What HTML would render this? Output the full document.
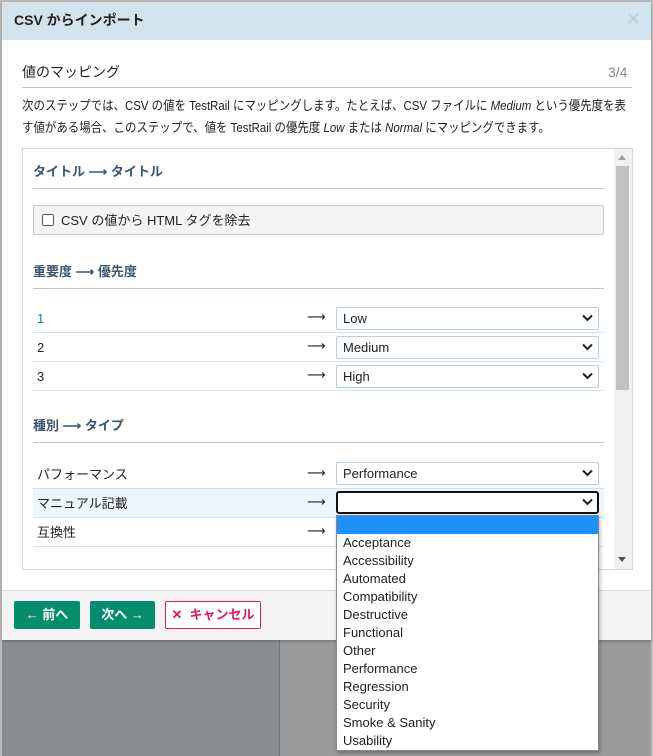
<!DOCTYPE html>
<html><head><meta charset="utf-8"><style>
*{margin:0;padding:0;box-sizing:border-box}
body{width:653px;height:756px;position:relative;overflow:hidden;background:#bdbdbd;font-family:"Liberation Sans","Noto Sans CJK JP",sans-serif;color:#222}
.a{position:absolute}
.t{font-size:13px;line-height:16px;white-space:nowrap}
.sq{transform:scaleX(.88);transform-origin:left center}
.sel{position:absolute;left:336px;width:263px;height:23px;border:1px solid #b9cfe0;border-radius:2px;background:#fff;font-size:13px;line-height:21px;padding-left:6px}
.sel svg{position:absolute;right:5px;top:6px}
.row{position:absolute;left:33px;width:571px;height:29px;border-bottom:1px solid #d3e2ec}
.row span{position:absolute;left:4px;top:7px;font-size:13px;line-height:16px}
.row i{position:absolute;left:274px;top:6px;font-style:normal;font-size:13px;font-family:"DejaVu Sans",sans-serif}
.h{position:absolute;left:33px;width:571px;border-bottom:1px solid #b3cbdb;font-size:13px;color:#3c5670;font-weight:bold;height:26px;line-height:18px}
.btn{position:absolute;top:601px;height:28px;border-radius:2px;font-size:13px;font-weight:bold;line-height:28px;text-align:center;color:#fff;background:#058e6e}
.dd{font-size:13px;line-height:18px;padding-left:6px;height:18px}
</style></head><body>
<div class="a" style="left:2px;top:598px;width:277px;height:158px;background:#8a8d90"></div>
<div class="a" style="left:279px;top:598px;width:372px;height:158px;background:#9b9b9b;border-left:1px solid #6f7a85"></div>
<div class="a" style="left:2px;top:2px;width:649px;height:638px;background:#fff;box-shadow:0 1px 3px rgba(0,0,0,.3)"></div>
<div class="a" style="left:2px;top:2px;width:649px;height:38px;background:#d3e3ed"></div>
<div class="a t" style="left:14px;top:12px;font-size:14px;font-weight:bold;color:#222">CSV からインポート</div>
<div class="a" style="left:626px;top:10px;color:#b8cedd;font-size:18px;line-height:18px">✕</div>
<div class="a t" style="left:22px;top:64px;font-size:14px">値のマッピング</div>
<div class="a t" style="left:608px;top:64px;font-size:14px;color:#888">3/4</div>
<div class="a" style="left:22px;top:87px;width:610px;height:1px;background:#c4c4c4"></div>
<div class="a t sq" style="left:22px;top:98px">次のステップでは、CSV の値を TestRail にマッピングします。たとえば、CSV ファイルに <i>Medium</i> という優先度を表</div>
<div class="a t sq" style="left:22px;top:120px">す値がある場合、このステップで、値を TestRail の優先度 <i>Low</i> または <i>Normal</i> にマッピングできます。</div>
<div class="a" style="left:22px;top:148px;width:611px;height:422px;border:1px solid #c8dce8"></div>
<div class="a" style="left:614px;top:149px;width:18px;height:420px;background:#f1f1f1"></div>
<div class="a" style="left:616px;top:166px;width:13px;height:224px;background:#c1c1c1"></div>
<div class="a" style="left:618px;top:155px;width:0;height:0;border-left:4px solid transparent;border-right:4px solid transparent;border-bottom:5px solid #a0a0a0"></div>
<div class="a" style="left:618px;top:557px;width:0;height:0;border-left:4px solid transparent;border-right:4px solid transparent;border-top:5px solid #505050"></div>
<div class="h" style="top:163px">タイトル ⟶ タイトル</div>
<div class="a" style="left:33px;top:205px;width:571px;height:30px;background:#f4f4f4;border:1px solid #c8c8c8;border-radius:2px"></div>
<div class="a" style="left:42px;top:214px;width:12px;height:12px;border:1px solid #555;border-radius:2px;background:#fff"></div>
<div class="a t" style="left:61px;top:213px">CSV の値から HTML タグを除去</div>
<div class="h" style="top:263px">重要度 ⟶ 優先度</div>
<div class="row" style="top:304px"><span style="color:#2a6fa8">1</span><i>⟶</i></div>
<div class="row" style="top:333px"><span>2</span><i>⟶</i></div>
<div class="row" style="top:362px"><span>3</span><i>⟶</i></div>
<div class="h" style="top:417px">種別 ⟶ タイプ</div>
<div class="row" style="top:460px"><span>パフォーマンス</span><i>⟶</i></div>
<div class="row" style="top:489px;background:#eef6fc"><span>マニュアル記載</span><i>⟶</i></div>
<div class="row" style="top:518px"><span>互換性</span><i>⟶</i></div>
<div class="sel" style="top:307px">Low<svg width="11" height="8" viewBox="0 0 11 8"><path d="M1 1.5l4.5 4.5 4.5-4.5" stroke="#222" stroke-width="2" fill="none"/></svg></div>
<div class="sel" style="top:336px">Medium<svg width="11" height="8" viewBox="0 0 11 8"><path d="M1 1.5l4.5 4.5 4.5-4.5" stroke="#222" stroke-width="2" fill="none"/></svg></div>
<div class="sel" style="top:365px">High<svg width="11" height="8" viewBox="0 0 11 8"><path d="M1 1.5l4.5 4.5 4.5-4.5" stroke="#222" stroke-width="2" fill="none"/></svg></div>
<div class="sel" style="top:462px">Performance<svg width="11" height="8" viewBox="0 0 11 8"><path d="M1 1.5l4.5 4.5 4.5-4.5" stroke="#222" stroke-width="2" fill="none"/></svg></div>
<div class="sel" style="top:491px;border:2px solid #111;border-radius:3px"><svg width="11" height="8" viewBox="0 0 11 8" style="top:5px;right:4px"><path d="M1 1.5l4.5 4.5 4.5-4.5" stroke="#222" stroke-width="2" fill="none"/></svg></div>
<div class="a" style="left:2px;top:590px;width:649px;height:50px;background:#f4f4f4;border-top:1px solid #dcdcdc"></div>
<div class="btn" style="left:14px;width:66px">← 前へ</div>
<div class="btn" style="left:90px;width:65px">次へ →</div>
<div class="btn" style="left:165px;width:96px;background:#fff;border:1px solid #e0195a;color:#e0195a;line-height:26px">✕&nbsp; キャンセル</div>
<div class="a" style="left:336px;top:515px;width:263px;height:236px;background:#fff;border:1px solid #888;box-shadow:1px 2px 4px rgba(0,0,0,.3)">
<div style="height:18px;background:#1e90ff"></div>
<div class="dd">Acceptance</div><div class="dd">Accessibility</div><div class="dd">Automated</div><div class="dd">Compatibility</div><div class="dd">Destructive</div><div class="dd">Functional</div><div class="dd">Other</div><div class="dd">Performance</div><div class="dd">Regression</div><div class="dd">Security</div><div class="dd">Smoke &amp; Sanity</div><div class="dd">Usability</div>
</div>
</body></html>
